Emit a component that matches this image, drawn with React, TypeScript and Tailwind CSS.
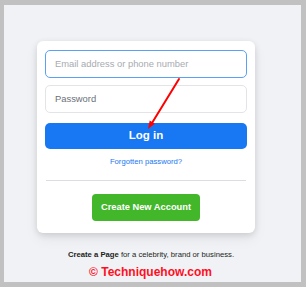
export default function App() {
  return (
    <div className="relative h-[287px] w-[306px] bg-[#c1c1c1] pb-[5px] pl-[4px] pr-[5px] pt-[5px] [font-family:'Liberation_Sans',Arial,sans-serif]">
      <div className="flex h-full w-full flex-col bg-[#f0f2f5]">
        <div className="ml-[33px] mt-[36px] flex w-[218px] flex-col rounded-[6px] bg-white px-[8px] pb-[12px] pt-[9px] shadow-[0_2px_6px_rgba(0,0,0,0.12),0_6px_14px_rgba(0,0,0,0.06)]">
          <div className="flex h-[28px] items-center rounded-[5px] border border-[#5aa0f5] pl-[9px] text-[9.4px] text-[#a8abb0]">
            Email address or phone number
          </div>
          <div className="mt-[7px] flex h-[28px] items-center rounded-[5px] border border-[#e2e4e8] pl-[9px] text-[9.4px] text-[#6b7078]">
            Password
          </div>
          <div className="mt-[10px] flex h-[26px] items-center justify-center rounded-[5px] bg-[#1877f2] text-[11.5px] font-bold text-white">
            Log in
          </div>
          <div className="mt-[7px] text-center text-[7.7px] leading-[12px] text-[#1877f2]">Forgotten password?</div>
          <div className="mx-[1px] mt-[12px] h-px bg-[#dadde1]" />
          <div className="mt-[13px] flex justify-center">
            <div className="flex h-[27px] w-[108px] items-center justify-center rounded-[4px] bg-[#42b72a] text-[9.3px] font-bold text-white">
              Create New Account
            </div>
          </div>
        </div>
        <div className="ml-[-3px] mt-[17px] text-center text-[7.7px] leading-[10px] text-[#1c1e21]">
          <span className="font-bold">Create a Page</span> for a celebrity, brand or business.
        </div>
        <div className="ml-[-4px] mt-[5px] text-center text-[12px] font-bold leading-[14px] text-[#ff0f1f]">© Techniquehow.com</div>
      </div>
      <svg className="absolute left-0 top-0" width="306" height="287" viewBox="0 0 306 287">
        <line x1="179" y1="79" x2="152" y2="123" stroke="#f00" strokeWidth="2" strokeLinecap="round" />
        <polygon points="148,129 149.7,120.6 154.8,123.8" fill="#f00" />
      </svg>
    </div>
  );
}
